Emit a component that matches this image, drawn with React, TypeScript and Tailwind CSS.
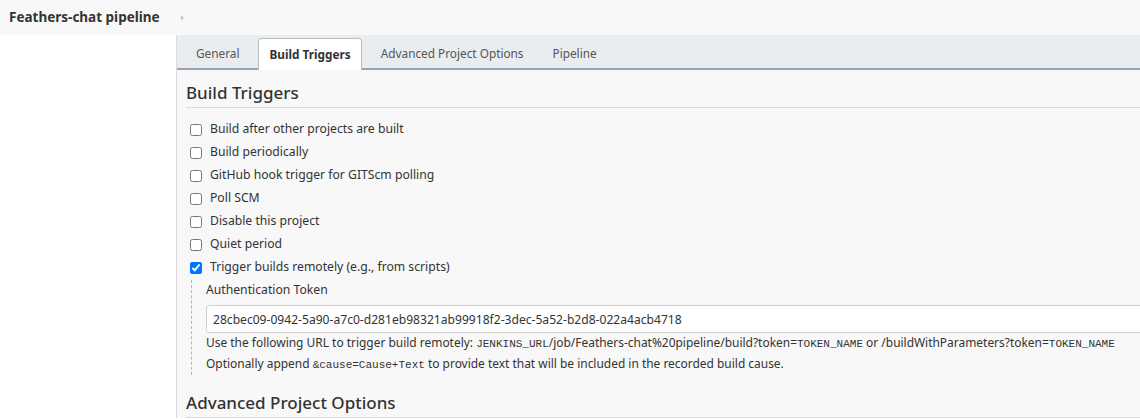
import React from 'react';

const triggers = [
  { label: 'Build after other projects are built', checked: false },
  { label: 'Build periodically', checked: false },
  { label: 'GitHub hook trigger for GITScm polling', checked: false },
  { label: 'Poll SCM', checked: false },
  { label: 'Disable this project', checked: false },
  { label: 'Quiet period', checked: false },
  { label: 'Trigger builds remotely (e.g., from scripts)', checked: true },
];

const tabs = ['General', 'Build Triggers', 'Advanced Project Options', 'Pipeline'];

const Mono: React.FC<{ children: React.ReactNode }> = ({ children }) => (
  <code className="font-['Liberation_Mono',monospace] text-[11px] text-[#333]">{children}</code>
);

const App: React.FC = () => {
  return (
    <div className="w-[1140px] h-[419px] overflow-hidden bg-white font-['Noto_Sans',sans-serif] text-[#333]">
      {/* Breadcrumb */}
      <div className="h-[35px] bg-[#f8f8f8] flex items-center pl-[9px]">
        <span className="text-[13.5px] font-bold text-[#333]">Feathers-chat pipeline</span>
        <svg className="ml-[20px] w-[6px] h-[8px]" viewBox="0 0 6 8">
          <path d="M1 1l3 3-3 3z" fill="#c4c4c4" />
        </svg>
      </div>

      <div className="flex">
        <div className="w-[176px] shrink-0 bg-white" />

        <div className="flex-1 border-l border-[#d9d9d9] bg-[#f8f8f8] min-w-0">
          {/* Tabs */}
          <div className="h-[35px] bg-[#e9edf0] border-b-2 border-[#9ba4ac] flex items-end gap-[9px] pl-[9px]">
            {tabs.map((tab) =>
              tab === 'Build Triggers' ? (
                <div
                  key={tab}
                  className="h-[32px] -mb-[2px] pt-[1px] px-[10px] flex items-center bg-white border border-b-0 border-[#b7bec4] rounded-t-[4px] text-[11.8px] font-bold text-[#333]"
                >
                  {tab}
                </div>
              ) : (
                <div key={tab} className="h-[32px] pt-[3px] px-[10px] flex items-center text-[11.8px] text-[#555]">
                  {tab}
                </div>
              )
            )}
          </div>

          {/* Content */}
          <div className="pl-[9px]">
            <h2 className="mt-[11px] pb-[2px] text-[17px] leading-[24px] font-medium text-[#333] border-b border-[#dcdcdc]">
              Build Triggers
            </h2>

            <div className="pt-[10px] flex flex-col">
              {triggers.map((t) => (
                <label key={t.label} className="h-[23px] flex items-center text-[12.2px]">
                  <input
                    type="checkbox"
                    defaultChecked={t.checked}
                    className="ml-[4px] mr-[8px] w-[12px] h-[12px] accent-[#0075ff]"
                  />
                  {t.label}
                </label>
              ))}
            </div>

            {/* Nested token block */}
            <div className="ml-[5px] mt-[1px] border-l border-dashed border-[#b5b5b5] pl-[14px]">
              <div className="h-[20px] text-[12.2px] flex items-center">Authentication Token</div>
              <input
                readOnly
                value="28cbec09-0942-5a90-a7c0-d281eb98321ab99918f2-3dec-5a52-b2d8-022a4acb4718"
                className="mt-[5px] w-[1000px] h-[28px] px-[6px] bg-white border border-[#cfcfcf] rounded-[3px] text-[12.1px] text-[#333] outline-none"
              />
              <div className="text-[11.95px] leading-[19px] text-[#333]">
                <div>
                  Use the following URL to trigger build remotely: <Mono>JENKINS_URL</Mono>
                  /job/Feathers-chat%20pipeline/build?token=<Mono>TOKEN_NAME</Mono> or /buildWithParameters?token=
                  <Mono>TOKEN_NAME</Mono>
                </div>
                <div>
                  Optionally append <Mono>&amp;cause=Cause+Text</Mono> to provide text that will be included in the
                  recorded build cause.
                </div>
              </div>
            </div>

            <h2 className="mt-[16px] pb-[2px] text-[17px] leading-[24px] font-medium text-[#333] border-b border-[#dcdcdc]">
              Advanced Project Options
            </h2>
          </div>
        </div>
      </div>
    </div>
  );
};

export default App;
